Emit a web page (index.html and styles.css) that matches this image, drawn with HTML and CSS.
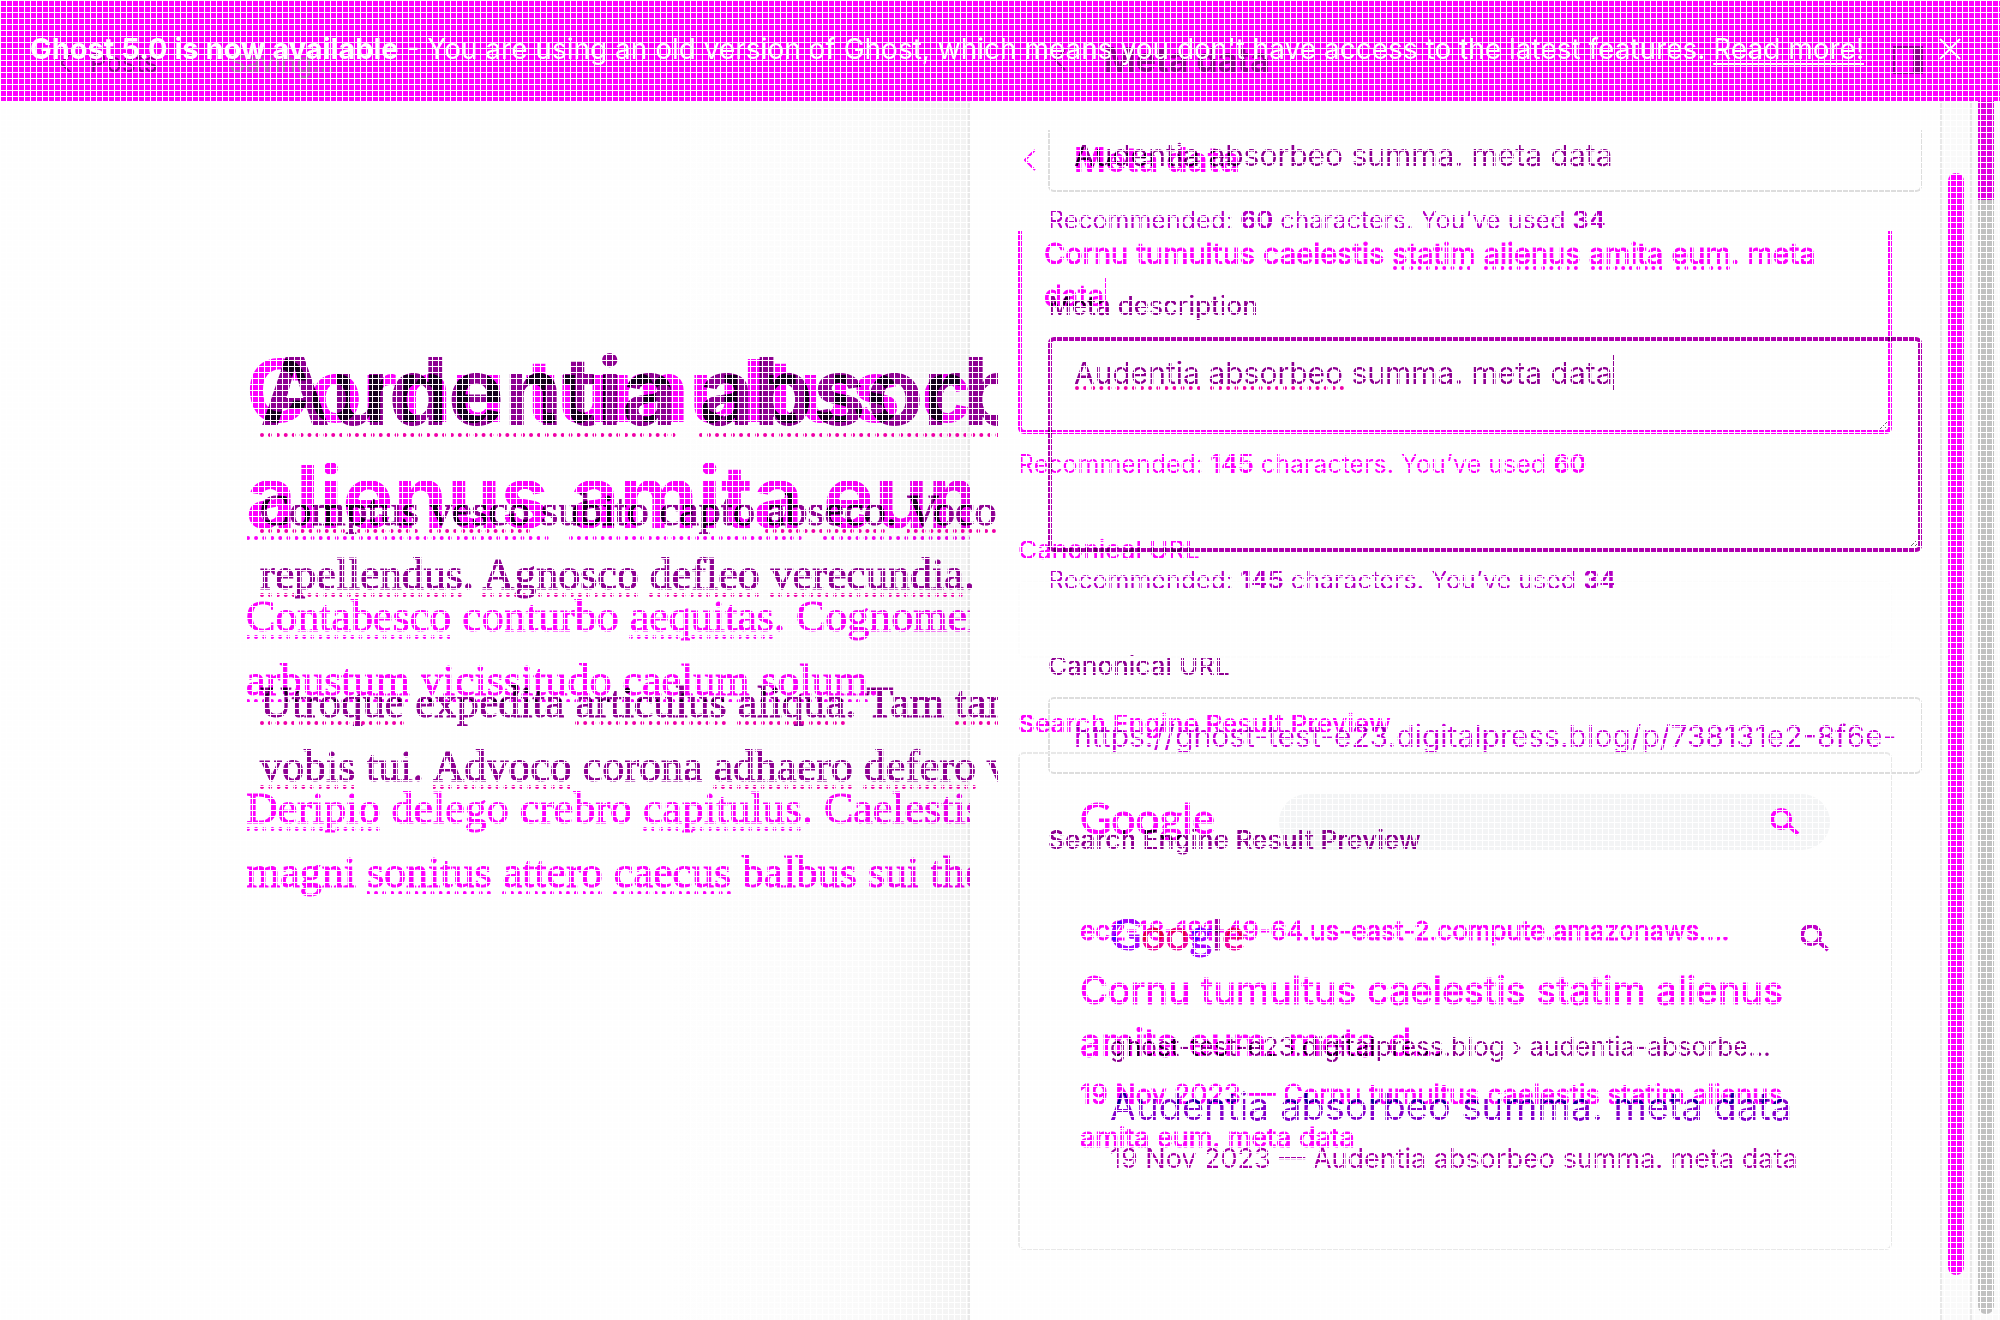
FILE: index.html
```
<!DOCTYPE html>
<html lang="en">
<head>
<meta charset="utf-8">
<title>Ghost - Meta data</title>
<link rel="stylesheet" href="styles.css">
</head>
<body>
<main class="stage">
  <div class="shade"></div>

  <section class="layer current">
    <article class="editor">
      <h1 class="title"><u>Audentia</u> <u>absorbeo</u> summa</h1>
      <p><u>Comptus</u> <u>vesco</u> subito capto <u>abseco</u>. <u>Voco</u><br><u>repellendus</u>. <u>Agnosco</u> <u>defleo</u> <u>verecundia</u>.</p>
      <p><u>Utroque</u> expedita <u>articulus</u> <u>aliqua</u>. Tam <u>tamen</u><br><u>vobis</u> tui. <u>Advoco</u> corona <u>adhaero</u> <u>defero</u> vomer</p>
    </article>
    <form class="panel">
      <input class="field cut" aria-label="Meta title" value="Audentia absorbeo summa. meta data">
      <p class="hint">Recommended: <b>60</b> characters. You’ve used <b>34</b></p>
      <label class="label" for="desc">Meta description</label>
      <div class="area">
        <textarea class="field text" id="desc" spellcheck="false">Audentia absorbeo summa. meta data</textarea>
        <span class="spell"><i style="width:126px"></i><i style="width:134px"></i></span>
        <i class="caret"></i>
      </div>
      <p class="hint">Recommended: <b>145</b> characters. You’ve used <b>34</b></p>
      <label class="label" for="url">Canonical URL</label>
      <input class="field url" id="url" placeholder="https://ghost-test-e23.digitalpress.blog/p/738131e2-8f6e-">
      <p class="label preview">Search Engine Result Preview</p>
      <div class="serp">
        <div class="bar">
          <span class="logo"><i class="g">G</i><i class="o">o</i><i class="o">o</i><i class="g">g</i><i class="l">l</i><i class="o">e</i></span>
          <span class="pill"><svg class="glass" viewBox="0 0 30 28"><circle cx="11" cy="11" r="9"/><path d="M18 17l10 9"/></svg></span>
        </div>
        <p class="site">ghost-test-e23.digitalpress.blog › audentia-absorbe…</p>
        <h2 class="result">Audentia absorbeo summa. meta data</h2>
        <p class="desc">19 Nov 2023 — Audentia absorbeo summa. meta data</p>
      </div>
    </form>
  </section>

  <section class="layer changed">
    <article class="editor">
      <h1 class="title burn">Cornu tumultus caelestis<br><u>alienus</u> <u>amita</u> <u>eum</u></h1>
      <p class="burn"><u>Contabesco</u> conturbo <u>aequitas</u>. Cognomen<br><u>arbustum</u> <u>vicissitudo</u> <u>caelum</u> <u>solum</u>.</p>
      <p class="burn"><u>Deripio</u> delego crebro <u>capitulus</u>. Caelestis<br>magni <u>sonitus</u> <u>attero</u> <u>caecus</u> balbus sui thema</p>
    </article>
    <form class="panel">
      <h2 class="heading burn"><svg class="chev" viewBox="0 0 12 22"><path d="M11 1L1 11l10 10"/></svg>Meta data</h2>
      <div class="area">
        <textarea class="field text cut burn" aria-label="Meta description" spellcheck="false">Cornu tumultus caelestis statim alienus amita eum. meta data</textarea>
        <span class="spell"><i style="width:78px"></i><i style="width:94px"></i><i style="width:72px"></i><i style="width:54px"></i></span>
        <i class="caret"></i>
      </div>
      <p class="hint burn">Recommended: <b>145</b> characters. You’ve used <b>60</b></p>
      <label class="label burn" for="url2">Canonical URL</label>
      <input class="field url" id="url2">
      <p class="label preview burn">Search Engine Result Preview</p>
      <div class="serp">
        <div class="bar">
          <span class="logo burn">Google</span>
          <span class="pill"><svg class="glass" viewBox="0 0 30 28"><circle cx="11" cy="11" r="9"/><path d="M18 17l10 9"/></svg></span>
        </div>
        <p class="site burn">ec2-18-191-49-64.us-east-2.compute.amazonaws.…</p>
        <h2 class="result burn">Cornu tumultus caelestis statim alienus<br>amita eum. meta d…</h2>
        <p class="desc burn">19 Nov 2023 — Cornu tumultus caelestis statim alienus<br>amita eum. meta data</p>
      </div>
    </form>
  </section>

  <div class="banner-bg"></div>
  <div class="rails">
    <div class="rail inner"><i class="thumb"></i></div>
    <div class="rail outer"><i class="thumb"></i></div>
  </div>
  <header class="topbar">
    <a class="back" href="#"><svg class="chev" viewBox="0 0 12 22"><path d="M11 1L1 11l10 10"/></svg>Posts</a>
    <span class="saving">Saving...</span>
    <h2 class="heading"><svg class="chev" viewBox="0 0 12 22"><path d="M11 1L1 11l10 10"/></svg>Meta data</h2>
    <button class="toggle" type="button" aria-label="Settings"></button>
  </header>
  <div class="banner">
    <p><b>Ghost 5.0 is now available</b> - You are using an old version of Ghost, which means you don't have access to the latest features. <a href="#">Read more!</a></p>
    <button class="close" type="button" aria-label="Close"><svg viewBox="0 0 22 22"><path d="M1 1l20 20M21 1L1 21"/></svg></button>
  </div>
</main>
</body>
</html>
```
FILE: styles.css
```
* { box-sizing: border-box; }
body, h1, h2, p { margin: 0; }
body { font-family: Inter, sans-serif; background: #fff; }
button { padding: 0; border: 0; background: none; }
i { font-style: normal; }
svg { fill: none; stroke: currentColor; flex: none; }

/* every layer shares the one grid cell */
.stage {
  display: grid;
  grid-template-columns: minmax(0, 1fr);
  min-height: 100vh;
  isolation: isolate;
  overflow: hidden;
  background: #fefefe;
}
.stage > * { grid-area: 1 / 1; min-width: 0; }
.stage::after {
  content: "";
  grid-area: 1 / 1;
  z-index: 9;
  pointer-events: none;
  background:
    repeating-linear-gradient(90deg, #fff 0 1px, transparent 1px 6px),
    repeating-linear-gradient(#fff 0 1px, transparent 1px 6px);
}

.shade {
  margin-right: 1030px;
  border-right: 2px solid #e8e8e8;
  background: linear-gradient(90deg, transparent calc(100% - 300px), #fafafa calc(100% - 100px), #f3f3f3);
}

.layer { display: grid; align-items: start; }
.current { grid-template-columns: minmax(0, 1fr) 1002px; color: #8e0092; }
.changed { grid-template-columns: minmax(0, 1fr) 1030px; color: #f0f; }
/* turns near-black where it crosses the layer below, pure magenta elsewhere */
.burn { mix-blend-mode: color-burn; color: #7b007b; }

.editor { overflow: hidden; white-space: nowrap; padding: 338px 0 32px 246px; }
.current .editor { padding-left: 260px; }
.title { font-size: 94px; line-height: 106px; font-weight: 700; }
.changed .title { font-size: 86px; }
.editor p { font: 44px/64px "Liberation Serif", serif; margin-bottom: 64px; -webkit-text-stroke: 1px currentColor; }
.title { margin-bottom: 35px; }
.editor u { text-decoration: underline dotted 4px; text-underline-offset: 8px; text-decoration-skip-ink: none; }
.editor p u { text-underline-offset: 4px; }
.current u { text-decoration-color: #f000a8; }

.panel { display: flex; flex-direction: column; }
.current .panel { padding: 130px 78px 0 50px; }
.changed .panel { padding: 140px 108px 0 48px; }

.heading { display: flex; align-items: center; gap: 38px; font-size: 34px; line-height: 40px; font-weight: 700; margin-left: 6px; }
.chev { width: 12px; height: 22px; stroke-width: 2; }

.field {
  display: block;
  width: 100%;
  height: 77px;
  padding: 0 24px;
  border: 2px solid #ddd;
  border-radius: 6px;
  background: none;
  font: 30px/42px Inter, sans-serif;
  color: inherit;
  outline: 0;
}
.field::placeholder { color: #c800d8; opacity: 1; }
.changed .url { border-color: #fcfcfc; }
.cut { height: 62px; padding-bottom: 10px; border-top: 0; border-radius: 0 0 6px 6px; }
.area { position: relative; }
.text { height: 215px; padding: 11px 22px; border: 4px solid #b000b0; resize: vertical; overflow: hidden; }
.changed .area { margin-top: 51px; }
.changed .text { height: 203px; padding-top: 2px; border: 4px solid #7b007b; border-top: 0; color: #7b007b; font-size: 29px; }
.caret { position: absolute; top: 18px; left: 565px; width: 1px; height: 35px; background: currentColor; }
.changed .caret { top: 47px; left: 87px; }
.spell { position: absolute; top: 49px; left: 27px; display: flex; gap: 9px; color: #f000a8; pointer-events: none; }
.spell i { border-top: 4px dotted; }
.changed .spell { top: 35px; left: 375px; gap: 13px; color: #f0f; }

.hint { margin-top: 12px; font-size: 25px; line-height: 32px; }
.current .hint { color: #b400c4; }
.changed .hint { margin-top: 14px; }
.label { margin: 54px 0 15px; font-size: 26px; line-height: 32px; font-weight: 500; }
.preview { margin: 50px 0 12px; font-weight: 600; }

.serp { padding: 40px 60px; border: 2px solid #e8e8e8; border-radius: 6px; }
.changed .serp { min-height: 498px; }
.changed .serp p, .changed .serp h2, .changed .text { -webkit-text-stroke: 1px currentColor; }
.current .serp { border-color: transparent; }
.bar { display: grid; grid-template-columns: 199px minmax(0, 1fr); align-items: center; }
.logo { padding-bottom: 8px; font: 43px/48px Lato, sans-serif; -webkit-text-stroke: 1px; }
.g { color: #a800ff; }
.o { color: #f000a0; }
.l { color: #a800a8; }
.pill { display: flex; justify-content: flex-end; align-items: center; height: 56px; padding-right: 30px; border-radius: 28px; }
.current .pill { color: #c000c8; }
.changed .pill { background: #f4f5f6; mix-blend-mode: multiply; }
.glass { width: 30px; height: 28px; stroke-width: 4; }
.site { margin-top: 65px; font-size: 26px; line-height: 32px; white-space: nowrap; }
.result { margin-top: 17px; font-size: 38px; line-height: 52px; font-weight: 400; white-space: nowrap; }
.current .result { color: #8600cc; }
.desc { margin-top: 5px; font-size: 27px; line-height: 43px; white-space: nowrap; }
.current .desc { color: #a800a8; }

.banner-bg { height: 101px; background: #f0f; z-index: 1; }
.rails { z-index: 2; display: flex; justify-content: flex-end; margin-top: 101px; }
.rail { width: 30px; background: #fafafa; border-left: 2px solid #e8e8e8; padding: 72px 6px 45px; }
.thumb { display: block; height: 100%; border-radius: 8px; background: #f0f; }
.outer { padding: 0 6px 6px; }
.outer .thumb { border-radius: 0 0 8px 8px; background: linear-gradient(#e000e0 99px, #c1c1c1 99px); }

.topbar { z-index: 2; height: 101px; display: flex; align-items: center; padding: 18px 77px 0 60px; color: #8e008e; font-size: 26px; line-height: 32px; }
.back { display: flex; align-items: center; gap: 18px; padding-top: 6px; color: inherit; text-decoration: none; width: 169px; }
.saving { width: 825px; padding-top: 6px; color: #b060b0; }
.topbar .heading { margin: 0; }
.toggle { width: 30px; height: 28px; margin-left: auto; border: 2px solid #8e008e; border-right-width: 10px; }

.banner { z-index: 3; height: 97px; display: flex; align-items: center; justify-content: space-between; padding: 0 39px 0 30px; color: #fff; font-size: 28px; line-height: 36px; white-space: nowrap; }
.banner b { font-size: 29px; }
.banner a { color: inherit; text-underline-offset: 4px; }
.close { width: 22px; height: 22px; color: #fff; }
.close svg { display: block; stroke-width: 2; }
```
